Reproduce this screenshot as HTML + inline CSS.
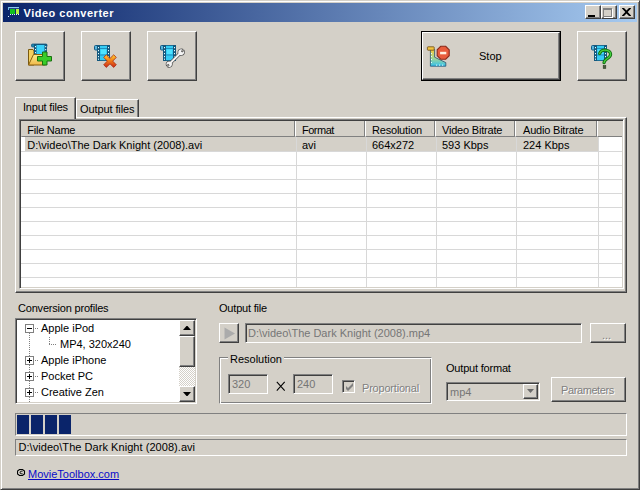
<!DOCTYPE html>
<html><head><meta charset="utf-8">
<style>
*{margin:0;padding:0;box-sizing:border-box}
html,body{width:640px;height:490px;overflow:hidden;background:#D4D0C8}
body{position:relative;font-family:"Liberation Sans",sans-serif;font-size:11px;color:#000}
.a{position:absolute}
.win{left:0;top:0;width:640px;height:490px;border:1px solid;border-color:#D4D0C8 #404040 #404040 #D4D0C8;box-shadow:inset 1px 1px #fff,inset -1px -1px #808080}
.title{left:3px;top:3px;width:634px;height:19px;background:linear-gradient(to right,#0A246A,#A6CAF0)}
.ttext{left:23.5px;top:6px;color:#fff;font-weight:bold;font-size:11px;line-height:14px;letter-spacing:0.5px}
.cb{width:16px;height:14px;background:#D4D0C8;border:1px solid;border-color:#fff #404040 #404040 #fff;box-shadow:inset -1px -1px #808080}
.raised{background:#D4D0C8;border:1px solid;border-color:#fff #404040 #404040 #fff;box-shadow:inset -1px -1px #808080,inset 1px 1px #D4D0C8}
.sunken{border:1px solid;border-color:#808080 #fff #fff #808080;box-shadow:inset 1px 1px #404040,inset -1px -1px #D4D0C8}
.thin{border:1px solid;border-color:#808080 #fff #fff #808080}
.t{white-space:nowrap;line-height:13px}
.n{letter-spacing:-0.2px}
.dis{color:#808080;text-shadow:1px 1px #fff}
.ge{color:#767676}
.hd{top:121px;height:16px;background:#D4D0C8;border-left:1px solid #fff;border-right:1px solid #808080;border-bottom:1px solid #808080}
.gl{left:21px;width:601px;height:1px;background:#D8D8D8}
.gv{top:137px;width:1px;height:150px;background:#D8D8D8}
.dotv{width:1px;background:repeating-linear-gradient(to bottom,#808080 0 1px,transparent 1px 2px)}
.doth{height:1px;background:repeating-linear-gradient(to right,#808080 0 1px,transparent 1px 2px)}
.pm{width:9px;height:9px;border:1px solid #808080;background:#fff}
.pm:before{content:"";position:absolute;left:1px;top:3px;width:5px;height:1px;background:#000}
.pm.p:after{content:"";position:absolute;left:3px;top:1px;width:1px;height:5px;background:#000}
</style></head><body>
<svg width="0" height="0" style="position:absolute"><defs>
<symbol id="film" viewBox="0 0 16 16" overflow="visible">
<rect x="0.5" y="0.5" width="4.5" height="4.5" rx="1" fill="#56B4DC" stroke="#145A84"/>
<rect x="3" y="0" width="13" height="16" fill="#14587E"/>
<rect x="6" y="0.8" width="7" height="14.4" fill="#34CCF4"/>
<rect x="6" y="3" width="7" height="1" fill="#1E90C0"/>
<rect x="6" y="9.5" width="7" height="1" fill="#1E90C0"/>
<rect x="7" y="4.5" width="5" height="4.5" fill="#4EE4FF"/>
<g fill="#E8FFFF"><rect x="4" y="2" width="1" height="1.2"/><rect x="4" y="5" width="1" height="1.2"/><rect x="4" y="8" width="1" height="1.2"/><rect x="4" y="11" width="1" height="1.2"/><rect x="4" y="13.6" width="1" height="1.2"/>
<rect x="14" y="2" width="1" height="1.2"/><rect x="14" y="5" width="1" height="1.2"/><rect x="14" y="8" width="1" height="1.2"/><rect x="14" y="11" width="1" height="1.2"/><rect x="14" y="13.6" width="1" height="1.2"/></g>
</symbol>
<linearGradient id="fold" x1="0" y1="0" x2="0" y2="1"><stop offset="0" stop-color="#FCEC90"/><stop offset="1" stop-color="#F0B848"/></linearGradient>
<linearGradient id="xg" x1="0" y1="0" x2="0" y2="1"><stop offset="0" stop-color="#FFD030"/><stop offset="0.5" stop-color="#F07818"/><stop offset="1" stop-color="#C82818"/></linearGradient>
<linearGradient id="lg" x1="0" y1="0" x2="0" y2="1"><stop offset="0" stop-color="#F8C838"/><stop offset="0.5" stop-color="#A8D890"/><stop offset="1" stop-color="#30C0F0"/></linearGradient>
</defs></svg>
<div class="a win"></div>
<div class="a title"></div>
<div class="a ttext">Video converter</div>
<div class="a cb" style="left:585px;top:5px"><div class="a" style="left:2px;top:9px;width:7px;height:2px;background:#000"></div></div>
<div class="a cb" style="left:601px;top:5px"><div class="a" style="left:1px;top:2px;width:9px;height:9px;border:1px solid #808080;border-top-width:2px;box-shadow:1px 1px #fff"></div></div>
<div class="a cb" style="left:619px;top:5px"><svg class="a" style="left:2px;top:2px" width="9" height="8" viewBox="0 0 9 8"><path d="M0 0h2l2.5 2.5 2.5-2.5h2v0.5l-3.3 3.5 3.3 3.5v0.5h-2l-2.5-2.5-2.5 2.5h-2v-0.5l3.3-3.5-3.3-3.5z" fill="#000"/></svg></div>

<!-- toolbar -->
<div class="a raised" style="left:15px;top:31px;width:50px;height:50px"></div>
<div class="a raised" style="left:81px;top:31px;width:50px;height:50px"></div>
<div class="a raised" style="left:147px;top:31px;width:50px;height:50px"></div>
<div class="a" style="left:421px;top:31px;width:140px;height:50px;border:1px solid #000"><div class="a raised" style="left:0;top:0;width:138px;height:48px"></div></div>
<div class="a t" style="left:479px;top:50px">Stop</div>
<div class="a raised" style="left:577px;top:31px;width:50px;height:50px"></div>

<!-- tabs -->
<div class="a" style="left:15px;top:117px;width:612px;height:176px;border:1px solid;border-color:#fff #404040 #404040 #fff;box-shadow:inset -1px -1px #808080"></div>
<div class="a" style="left:76px;top:99px;width:63px;height:18px;background:#D4D0C8;border:1px solid;border-color:#fff #404040 transparent #fff;border-bottom:0;box-shadow:inset -1px 0 #808080"></div>
<div class="a" style="left:15px;top:97px;width:61px;height:22px;background:#D4D0C8;border:1px solid;border-color:#fff #404040 transparent #fff;border-bottom:0;box-shadow:inset -1px 0 #808080"></div>
<div class="a t n" style="left:23px;top:100.5px">Input files</div>
<div class="a t" style="left:80px;top:103px;letter-spacing:-0.1px">Output files</div>

<!-- listview -->
<div class="a sunken" style="left:19px;top:119px;width:605px;height:170px;background:#fff"></div>
<div class="a hd" style="left:21px;width:274px;border-left-color:#D4D0C8"></div>
<div class="a hd" style="left:295px;width:70px"></div>
<div class="a hd" style="left:365px;width:70px"></div>
<div class="a hd" style="left:435px;width:80px"></div>
<div class="a hd" style="left:515px;width:82px"></div>
<div class="a hd" style="left:597px;width:25px;border-right:0"></div>
<div class="a t n" style="left:27.3px;top:124px;letter-spacing:-0.25px">File Name</div>
<div class="a t" style="left:302px;top:124px;letter-spacing:-0.5px">Format</div>
<div class="a t n" style="left:372px;top:124px">Resolution</div>
<div class="a t n" style="left:442px;top:124px">Video Bitrate</div>
<div class="a t n" style="left:523px;top:124px">Audio Bitrate</div>
<div class="a" style="left:25px;top:137px;width:573px;height:14px;background:#D4D0C8"></div>
<div class="a gl" style="top:151px"></div>
<div class="a gl" style="top:165px"></div>
<div class="a gl" style="top:179px"></div>
<div class="a gl" style="top:193px"></div>
<div class="a gl" style="top:207px"></div>
<div class="a gl" style="top:221px"></div>
<div class="a gl" style="top:235px"></div>
<div class="a gl" style="top:249px"></div>
<div class="a gl" style="top:263px"></div>
<div class="a gl" style="top:277px"></div>
<div class="a gv" style="left:296px"></div>
<div class="a gv" style="left:366px"></div>
<div class="a gv" style="left:436px"></div>
<div class="a gv" style="left:516px"></div>
<div class="a gv" style="left:598px"></div>
<div class="a t" style="left:27.3px;top:139px">D:\video\The Dark Knight (2008).avi</div>
<div class="a t" style="left:302px;top:139px">avi</div>
<div class="a t" style="left:372px;top:139px">664x272</div>
<div class="a t" style="left:442px;top:139px">593 Kbps</div>
<div class="a t" style="left:523px;top:139px">224 Kbps</div>

<!-- bottom -->
<div class="a t n" style="left:18px;top:302px">Conversion profiles</div>
<div class="a sunken" style="left:15px;top:318px;width:182px;height:86px;background:#fff"></div>
<div class="a dotv" style="left:29px;top:333px;height:70px"></div>
<div class="a dotv" style="left:49px;top:337px;height:7px"></div>
<div class="a doth" style="left:49px;top:344px;width:8px"></div>
<div class="a doth" style="left:35px;top:328px;width:4px"></div>
<div class="a doth" style="left:35px;top:360px;width:4px"></div>
<div class="a doth" style="left:35px;top:376px;width:4px"></div>
<div class="a doth" style="left:35px;top:392px;width:4px"></div>
<div class="a pm" style="left:25px;top:324px"></div>
<div class="a pm p" style="left:25px;top:356px"></div>
<div class="a pm p" style="left:25px;top:372px"></div>
<div class="a pm p" style="left:25px;top:388px"></div>
<div class="a t" style="left:41px;top:322px">Apple iPod</div>
<div class="a t" style="left:60px;top:338px">MP4, 320x240</div>
<div class="a t" style="left:41px;top:354px">Apple iPhone</div>
<div class="a t" style="left:41px;top:370px">Pocket PC</div>
<div class="a t" style="left:41px;top:386px">Creative Zen</div>
<!-- scrollbar -->
<div class="a" style="left:179px;top:320px;width:16px;height:82px;background-color:#fff;background-image:repeating-conic-gradient(#D4D0C8 0 25%,#fff 0 50%);background-size:2px 2px"></div>
<div class="a raised" style="left:179px;top:320px;width:16px;height:16px"><svg class="a" style="left:3px;top:5px" width="8" height="4"><path d="M3.5 0h1l3.5 4h-8z" fill="#000"/></svg></div>
<div class="a raised" style="left:179px;top:336px;width:16px;height:31px"></div>
<div class="a raised" style="left:179px;top:386px;width:16px;height:16px"><svg class="a" style="left:3px;top:5px" width="8" height="4"><path d="M0 0h8l-3.5 4h-1z" fill="#000"/></svg></div>

<div class="a t n" style="left:219px;top:302px">Output file</div>
<div class="a raised" style="left:219px;top:323px;width:20px;height:20px"><svg class="a" style="left:4px;top:2px" width="12" height="14"><path d="M0.5 1.5l10.5 6-10.5 6z" fill="#ABABAB"/></svg></div>
<div class="a sunken" style="left:245px;top:323px;width:337px;height:20px"></div>
<div class="a t ge" style="left:248px;top:327px">D:\video\The Dark Knight (2008).mp4</div>
<div class="a raised" style="left:590px;top:323px;width:36px;height:20px"></div>
<div class="a t dis" style="left:602px;top:329px">...</div>

<div class="a" style="left:219px;top:357px;width:213px;height:47px;border:1px solid;border-color:#808080 #fff #fff #808080;box-shadow:inset 1px 1px #fff,inset -1px -1px #808080"></div>
<div class="a t" style="left:228px;top:353px;background:#D4D0C8;padding:0 2px 0 2px">Resolution</div>
<div class="a sunken" style="left:228px;top:374px;width:40px;height:20px"></div>
<div class="a t ge" style="left:232px;top:378px">320</div>
<div class="a sunken" style="left:293px;top:374px;width:40px;height:20px"></div>
<div class="a t ge" style="left:297px;top:378px">240</div>
<svg class="a" style="left:276px;top:381px" width="10" height="11"><path d="M0.8 0.8L8.7 9.7M8.7 0.8L0.8 9.7" stroke="#000" stroke-width="1.05"/></svg>
<div class="a sunken" style="left:342px;top:380px;width:13px;height:13px"><svg class="a" style="left:2px;top:2px" width="9" height="9"><path d="M1 3v3l2 2 5-5v-3l-5 5z" fill="#808080"/></svg></div>
<div class="a t dis n" style="left:362px;top:382px">Proportional</div>
<div class="a t n" style="left:446px;top:362px">Output format</div>
<div class="a sunken" style="left:446px;top:382px;width:94px;height:19px"></div>
<div class="a t ge" style="left:450px;top:386px">mp4</div>
<div class="a raised" style="left:523px;top:384px;width:15px;height:15px"><svg class="a" style="left:3px;top:4px" width="8" height="5"><path d="M0 0h7l-3.5 4z" fill="#6A6A6A"/></svg></div>
<div class="a raised" style="left:551px;top:377px;width:75px;height:25px"></div>
<div class="a t dis" style="left:561px;top:384px;letter-spacing:-0.4px">Parameters</div>

<div class="a thin" style="left:15px;top:413px;width:612px;height:23px"></div>
<div class="a" style="left:17px;top:415px;width:12px;height:19px;background:#0A246A"></div>
<div class="a" style="left:31px;top:415px;width:12px;height:19px;background:#0A246A"></div>
<div class="a" style="left:45px;top:415px;width:12px;height:19px;background:#0A246A"></div>
<div class="a" style="left:59px;top:415px;width:12px;height:19px;background:#0A246A"></div>
<div class="a thin" style="left:15px;top:439px;width:612px;height:17px"></div>
<div class="a t" style="left:18.5px;top:441px;letter-spacing:0.05px">D:\video\The Dark Knight (2008).avi</div>
<svg class="a" style="left:17px;top:468px" width="10" height="9" viewBox="0 0 10 9"><path d="M2.5 1.5h3l2 1.5v3l-2 1.5h-3l-2-1.5v-3z" fill="none" stroke="#000" stroke-width="1.1"/><path d="M5.6 3.2H3.8L3.1 3.9V5.1L3.8 5.8H5.6" fill="none" stroke="#000" stroke-width="0.9"/></svg>
<div class="a t" style="left:28px;top:468px;color:#0A0AC8;text-decoration:underline">MovieToolbox.com</div>

<!-- title icon -->
<svg class="a" style="left:7px;top:6px" width="14" height="12" viewBox="0 0 14 12">
<rect x="1" y="1" width="11" height="1.2" fill="#8CC8F0"/>
<rect x="1" y="1" width="1" height="3" fill="#6AB8E0"/>
<rect x="3" y="3" width="5" height="5" fill="#10C020"/>
<rect x="9" y="3" width="3" height="5" fill="#B8F040"/>
<g fill="#E0F4FF"><rect x="3" y="8" width="1" height="1"/><rect x="5" y="8" width="1" height="1"/><rect x="7" y="8" width="1" height="1"/><rect x="9" y="8" width="1" height="1"/><rect x="11" y="8" width="1" height="1"/><rect x="1" y="10" width="1" height="1"/></g>
</svg>
<!-- add icon -->
<svg class="a" style="left:26px;top:40px" width="28" height="28" viewBox="0 0 28 28">
<path d="M2.5 9.5h4.5l1 1.5v14h-5.5z" fill="#F4D060" stroke="#7A5A10" stroke-width="1"/>
<rect x="5.5" y="4" width="15.5" height="3" rx="1" fill="#1E86AE" stroke="#145A84" stroke-width="0.8"/>
<rect x="8" y="4" width="13" height="10.5" fill="#14587E"/>
<rect x="10.5" y="5" width="8" height="9.5" fill="#38D0F8"/>
<g fill="#E8FFFF"><rect x="9" y="6" width="1" height="1.2"/><rect x="9" y="9" width="1" height="1.2"/><rect x="9" y="12" width="1" height="1.2"/><rect x="19.2" y="6" width="1" height="1.2"/><rect x="19.2" y="9" width="1" height="1.2"/><rect x="19.2" y="12" width="1" height="1.2"/></g>
<path d="M2.5 25l5-10.5h12v10.5z" fill="url(#fold)" stroke="#8A6010" stroke-width="1"/>
<path d="M16.5 12h4.5v4.5h4.5v4.5h-4.5v4h-4.5v-4h-5v-4.5h5z" fill="#38CC28" stroke="#1A7010" stroke-width="1"/>
</svg>
<!-- delete icon -->
<svg class="a" style="left:94px;top:45px" width="26" height="26" viewBox="0 0 26 26">
<use href="#film" x="0" y="0" width="16" height="16"/>
<path d="M12.3 9.8l3.7 3.6 3.7-3.6 2.6 2.6-3.6 3.7 3.6 3.7-2.6 2.6-3.7-3.6-3.7 3.6-2.6-2.6 3.6-3.7-3.6-3.7z" fill="url(#xg)" stroke="#A82810" stroke-width="0.8"/>
</svg>
<!-- wrench icon -->
<svg class="a" style="left:160px;top:45px" width="30" height="26" viewBox="0 0 30 26">
<use href="#film" x="0" y="0" width="16" height="16"/>
<g transform="translate(15.2 13.2) rotate(-45)">
<g stroke="#505050" stroke-width="1.4" fill="#505050">
<rect x="-7" y="-1" width="14" height="2"/>
<path d="M11.35 -1A3 3 0 1 0 11.35 1L9 1L9 -1Z"/>
<path d="M-11.1 1A2.8 2.8 0 1 0 -11.1 -1L-8.8 -1L-8.8 1Z"/>
</g>
<g fill="#F4F4F4">
<rect x="-7" y="-1" width="14" height="2"/>
<path d="M11.35 -1A3 3 0 1 0 11.35 1L9 1L9 -1Z"/>
<path d="M-11.1 1A2.8 2.8 0 1 0 -11.1 -1L-8.8 -1L-8.8 1Z"/>
</g>
</g>
</svg>
<!-- stop icon -->
<svg class="a" style="left:426px;top:44px" width="28" height="26" viewBox="0 0 28 26">
<path d="M4.4 5.5H8.6V13.2L19.8 18.6V22.2H4.4Z" fill="url(#lg)" stroke="#2A5070" stroke-width="0.8"/>
<rect x="1.4" y="2.8" width="6.8" height="3.4" rx="0.6" fill="#F2C440" stroke="#6A4A18" stroke-width="0.8"/>
<g fill="#E8FFFF"><rect x="5" y="9" width="1" height="1"/><rect x="5" y="12" width="1" height="1"/><rect x="5" y="15" width="1" height="1"/><rect x="5" y="18" width="1" height="1"/><rect x="10" y="20.6" width="1.2" height="1"/><rect x="13" y="20.6" width="1.2" height="1"/><rect x="16" y="20.6" width="1.2" height="1"/></g>
<path d="M23.2 5.8L19.7 2.3L14.7 2.3L11.2 5.8L11.2 11.7L14.7 15.2L19.7 15.2L23.2 11.7Z" fill="#E85C3C" stroke="#8A2A1A" stroke-width="1.1"/>
<rect x="14.1" y="7.8" width="6.2" height="2.5" fill="#FFF0E0"/>
</svg>
<!-- help icon -->
<svg class="a" style="left:591px;top:45px" width="26" height="26" viewBox="0 0 26 26">
<use href="#film" x="0" y="0" width="16" height="16"/>
<path d="M8.6 8.6C9.5 6 11.5 5.1 13.5 5.1C17.5 5.1 19.6 7 19.6 9.3C19.6 11.5 17.5 13 15.5 14.2C14 15.2 13.2 16.2 13 17.7" fill="none" stroke="#127012" stroke-width="3.2" stroke-linecap="round"/>
<path d="M8.6 8.6C9.5 6 11.5 5.1 13.5 5.1C17.5 5.1 19.6 7 19.6 9.3C19.6 11.5 17.5 13 15.5 14.2C14 15.2 13.2 16.2 13 17.7" fill="none" stroke="#48D040" stroke-width="1.3" stroke-linecap="round"/>
<rect x="12.2" y="20.6" width="2.6" height="2.8" fill="#4A5A40" stroke="#2A3A20" stroke-width="0.6"/>
</svg>
</body></html>
